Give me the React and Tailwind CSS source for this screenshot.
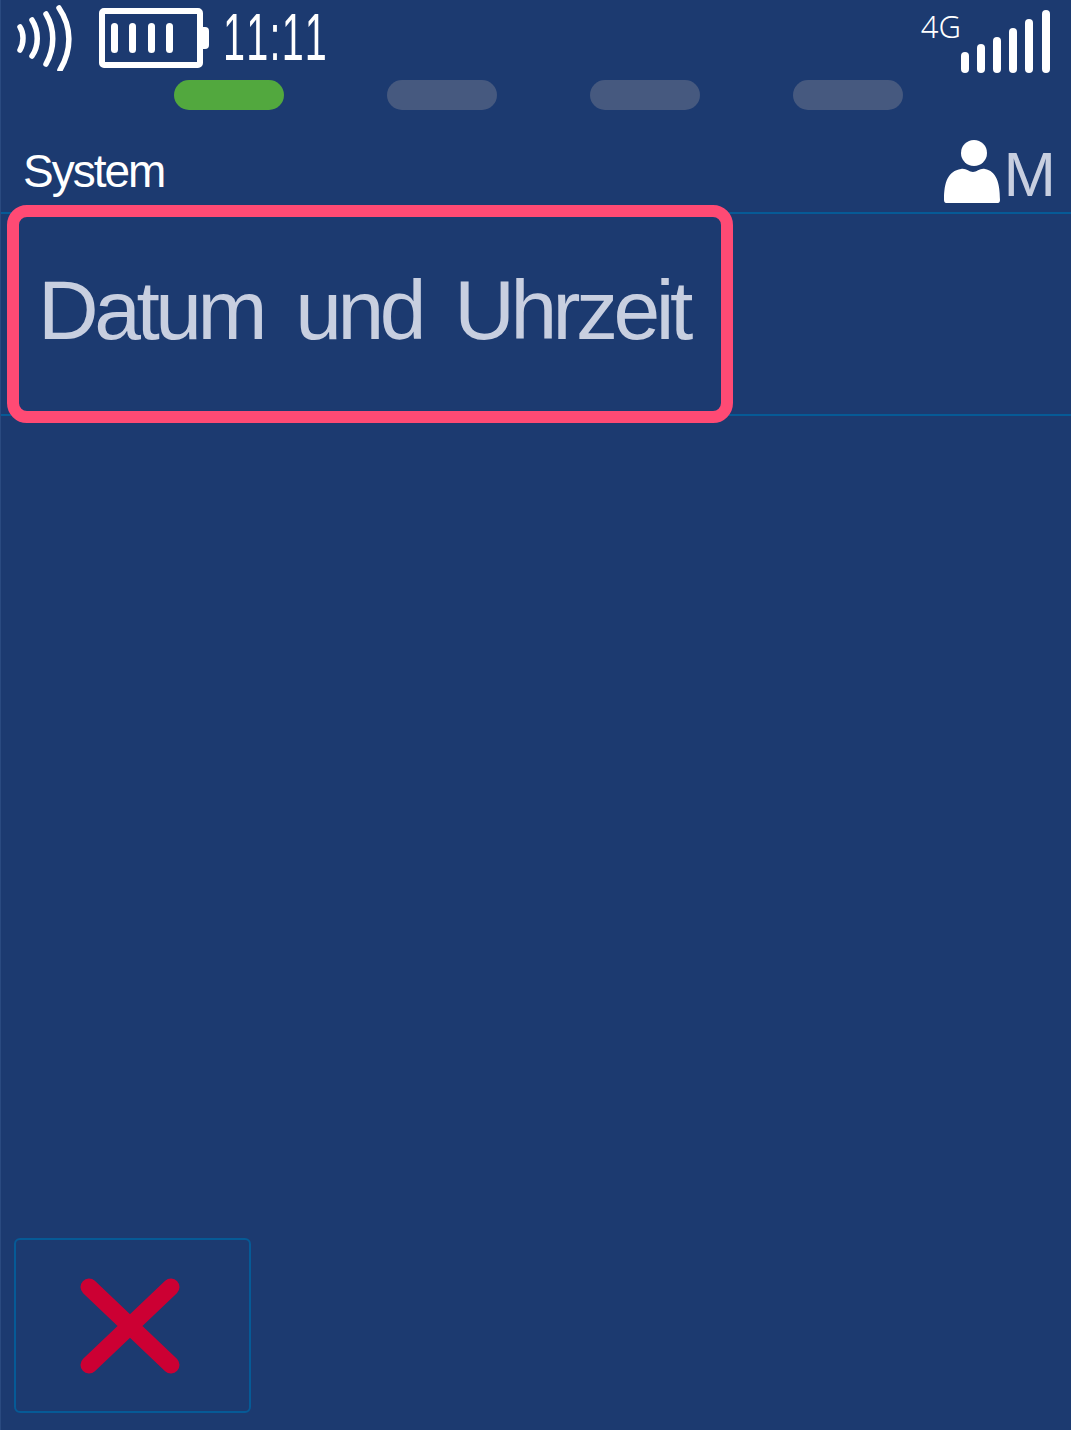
const Nfc = () => (
  <svg width="56" height="66" viewBox="0 0 56 66" fill="none" stroke="white" strokeLinecap="round" strokeWidth="5.5">
    <path d="M3 22 C7 28 7 38 3 45" />
    <path d="M15 15 C22 26 22 41 15 51" />
    <path d="M29 9 C38 24 38 43 29 59" />
    <path d="M42 3 C55 22 55 45 43 65" />
  </svg>
);

const Battery = () => (
  <svg width="112" height="60" viewBox="0 0 112 60" fill="white">
    <rect x="3" y="3" width="98" height="54" rx="2" fill="none" stroke="white" strokeWidth="6" />
    <rect x="12" y="15" width="7" height="30" rx="3.5" />
    <rect x="30" y="15" width="7" height="30" rx="3.5" />
    <rect x="49" y="15" width="7" height="30" rx="3.5" />
    <rect x="67" y="15" width="7" height="30" rx="3.5" />
    <path d="M104 19 h2 a4 4 0 0 1 4 4 v14 a4 4 0 0 1 -4 4 h-2 z" />
  </svg>
);

const Signal = () => (
  <svg width="92" height="64" viewBox="0 0 92 64" fill="white">
    <rect x="0" y="42" width="8" height="21" rx="4" />
    <rect x="16" y="34" width="8" height="29" rx="4" />
    <rect x="32" y="27" width="8" height="36" rx="4" />
    <rect x="48" y="18" width="8" height="45" rx="4" />
    <rect x="64" y="9" width="8" height="54" rx="4" />
    <rect x="81" y="0" width="8" height="63" rx="4" />
  </svg>
);

const User = () => (
  <svg width="56" height="64" viewBox="0 0 56 64" fill="white">
    <circle cx="30" cy="13" r="13" />
    <path d="M0 60 C0 42 4 31 17 29 C22 28 25 32 29 32 C33 32 36 28 41 29 C52 31 56 42 56 60 C56 62 55 63 54 63 H2 C1 63 0 62 0 60 Z" />
  </svg>
);

const CloseIcon = () => (
  <svg width="100" height="96" viewBox="0 0 100 96" fill="none" stroke="#cc0033" strokeWidth="17" strokeLinecap="round">
    <path d="M9 9 L91 87" />
    <path d="M91 9 L9 87" />
  </svg>
);

export default function App() {
  return (
    <div className="flex h-[1430px] w-[1071px] flex-col overflow-hidden border-l border-[#2a4a80] bg-[#1c3a70] font-['Liberation_Sans',sans-serif]">
      {/* status bar */}
      <div className="flex h-[80px] items-start justify-between pl-[16px] pr-[18px]">
        <div className="flex items-start">
          <div className="mt-[5px]"><Nfc /></div>
          <div className="ml-[26px] mt-[8px]"><Battery /></div>
          <span className="ml-[12px] origin-left scale-x-[0.6] text-[66px] leading-[74px] tracking-[2px] text-white [font-kerning:none]">11:11</span>
        </div>
        <div className="flex items-start">
          <span className="mt-[7px] font-['Noto_Sans',sans-serif] text-[31px] leading-[38px] font-light text-white">4G</span>
          <div className="mt-[10px]"><Signal /></div>
        </div>
      </div>

      {/* step pills */}
      <div className="flex h-[30px] pl-[173px]">
        <div className="mr-[103px] h-[30px] w-[110px] rounded-full bg-[#52a83e]" />
        <div className="mr-[93px] h-[30px] w-[110px] rounded-full bg-[#46597f]" />
        <div className="mr-[93px] h-[30px] w-[110px] rounded-full bg-[#46597f]" />
        <div className="h-[30px] w-[110px] rounded-full bg-[#46597f]" />
      </div>

      {/* title row */}
      <div className="flex h-[104px] items-end justify-between border-b-2 border-[#065a96] pl-[22px] pr-[15px]">
        <span className="mb-[13px] text-[46px] leading-[56px] tracking-[-2px] text-white">System</span>
        <div className="flex items-start">
          <div className="mb-[8px] mt-[2px]"><User /></div>
          <span className="ml-[4px] -mt-[1px] text-[63px] leading-[74px] text-[#c8cfe0]">M</span>
        </div>
      </div>

      {/* list */}
      <div className="relative flex h-[202px] items-center border-b-2 border-[#065a96] pl-[37px]">
        <span className="mb-[8px] text-[84px] leading-[100px] tracking-[-4.5px] text-[#c8cfe0] [word-spacing:13.5px]">Datum und Uhrzeit</span>
        <div className="absolute left-[6px] top-[-9px] h-[218px] w-[726px] rounded-[20px] border-[12px] border-[#ff4a74]" />
      </div>

      <div className="flex-1" />

      {/* cancel */}
      <div className="pb-[17px] pl-[13px]">
        <div className="flex h-[175px] w-[237px] items-center justify-center rounded-[6px] border-2 border-[#065a96] pr-[5px]">
          <CloseIcon />
        </div>
      </div>
    </div>
  );
}
